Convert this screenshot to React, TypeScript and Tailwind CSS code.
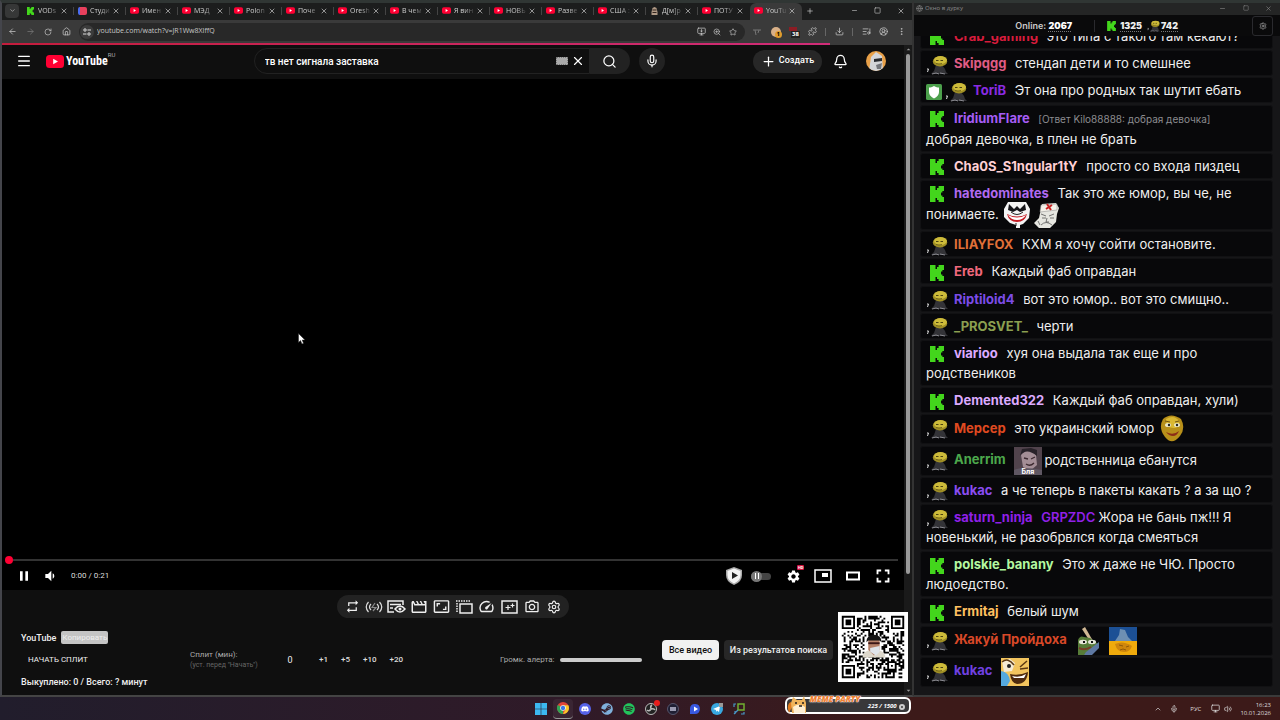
import { ReactNode, useState } from 'react';
import { X, Plus, Minus, Square, ArrowLeft, ArrowRight, RotateCw, House, Search, ZoomIn, Star, Puzzle, Download, ListMusic, CircleUserRound, EllipsisVertical, Menu, Mic, Bell, ChevronDown, ChevronUp, MonitorDown, Globe, Settings, Volume2, Monitor } from 'lucide-react';
import { MdRepeat, MdOutlineMovie, MdAspectRatio, MdOutlineSpeed, MdOutlinePhotoCamera, MdFullscreen, MdPause, MdVolumeDown, MdSettings, MdArrowDropDown, MdArrowDropUp } from 'react-icons/md';
import { FaDiscord, FaSpotify, FaSteam } from 'react-icons/fa';

type Badge = 'kick' | 'twitch' | 'mod';
type EmoteName = 'troll' | 'nurse' | 'smile' | 'photo' | 'frog' | 'flag' | 'laugh';

interface Message {
    badges: Badge[];
    name: string;
    color: string;
    tag?: string;
    reply?: string;
    body: (string | { emote: EmoteName })[];
}

const tabs = [
    { icon: 'kick', title: 'VODs' },
    { icon: 'studio', title: 'Студи' },
    { icon: 'yt', title: 'Имен' },
    { icon: 'yt', title: 'МЭД' },
    { icon: 'yt', title: 'Polon' },
    { icon: 'yt', title: 'Поче' },
    { icon: 'yt', title: 'Oresh' },
    { icon: 'yt', title: 'В чем' },
    { icon: 'yt', title: 'Я вин' },
    { icon: 'yt', title: 'НОВЬ' },
    { icon: 'yt', title: 'Разве' },
    { icon: 'yt', title: 'США :' },
    { icon: 'face', title: 'Д[м]р' },
    { icon: 'yt', title: 'ПОТУ' },
    { icon: 'yt', title: 'YouTu' },
];

const messages: Message[] = [
    { badges: ['kick'], name: 'Crab_gaming', color: 'text-[#d81c3c]', body: ['это типа с такого там кекают?'] },
    { badges: ['twitch'], name: 'Skipqgg', color: 'text-[#e05c85]', body: ['стендап дети и то смешнее'] },
    { badges: ['mod', 'twitch'], name: 'ToriB', color: 'text-[#8a2be2]', body: ['Эт она про родных так шутит ебать'] },
    { badges: ['kick'], name: 'IridiumFlare', color: 'text-[#a55cf5]', reply: '[Ответ Kilo88888: добрая девочка]', body: ['добрая девочка, в плен не брать'] },
    { badges: ['kick'], name: 'Cha0S_S1ngular1tY', color: 'text-[#ffd0d4]', body: ['просто со входа пиздец'] },
    { badges: ['kick'], name: 'hatedominates', color: 'text-[#b06af0]', body: ['Так это же юмор, вы че, не понимаете. ', { emote: 'troll' }, { emote: 'nurse' }] },
    { badges: ['twitch'], name: 'ILIAYFOX', color: 'text-[#e07038]', body: ['КХМ я хочу сойти остановите.'] },
    { badges: ['kick'], name: 'Ereb', color: 'text-[#f0687c]', body: ['Каждый фаб оправдан'] },
    { badges: ['twitch'], name: 'Riptiloid4', color: 'text-[#7c4ce8]', body: ['вот это юмор.. вот это смищно..'] },
    { badges: ['twitch'], name: '_PROSVET_', color: 'text-[#8ca050]', body: ['черти'] },
    { badges: ['kick'], name: 'viarioo', color: 'text-[#dcaaff]', body: ['хуя она выдала так еще и про родствеников'] },
    { badges: ['kick'], name: 'Demented322', color: 'text-[#dcaaff]', body: ['Каждый фаб оправдан, хули)'] },
    { badges: ['twitch'], name: 'Мерсер', color: 'text-[#e04a20]', body: ['это украинский юмор ', { emote: 'smile' }] },
    { badges: ['twitch'], name: 'Anerrim', color: 'text-[#4ca84c]', body: [{ emote: 'photo' }, 'родственница ебанутся'] },
    { badges: ['twitch'], name: 'kukac', color: 'text-[#8a4cf0]', body: ['а че теперь в пакеты какать ? а за що ?'] },
    { badges: ['twitch'], name: 'saturn_ninja', color: 'text-[#9020e8]', tag: 'GRPZDC', body: ['Жора не бань пж!!! Я новенький, не разобрвлся когда смеяться'] },
    { badges: ['kick'], name: 'polskie_banany', color: 'text-[#b4f8a0]', body: ['Это ж даже не ЧЮ. Просто людоедство.'] },
    { badges: ['kick'], name: 'Ermitaj', color: 'text-[#ffc060]', body: ['белый шум'] },
    { badges: ['twitch'], name: 'Жакуй Пройдоха', color: 'text-[#d84828]', body: [{ emote: 'frog' }, ' ', { emote: 'flag' }] },
    { badges: ['twitch'], name: 'kukac', color: 'text-[#7040e0]', body: [{ emote: 'laugh' }] },
];

function KickLogo({ className }: { className: string }) {
    return (
        <svg viewBox="0 0 14 16" className={className} fill="#43d61c">
            <path d="M0 0h5.500v4H7V2h1.600V0H14v5h-1.600v1.600H11v2.800h1.400V11H14v5H8.600v-2H7v-2H5.500v4H0z" />
        </svg>
    );
}

function TwitchGuy({ className }: { className: string }) {
    return (
        <svg viewBox="0 0 22 20" className={className}>
            <path d="M5 19 8 16l2-6h6l3 4 1 3 2 2z" fill="#333337" />
            <path d="m6 19 4-1 3 1m1-1 5 1" stroke="#8a8a90" strokeWidth="1" fill="none" />
            <ellipse cx="14" cy="6.500" rx="7.200" ry="5" fill="#a08f24" />
            <ellipse cx="14.500" cy="5" rx="6.500" ry="4" fill="#cdbb3a" />
            <path d="M10 5.500h2.500m2 0H17" stroke="#4b4312" strokeWidth="1.200" />
            <path d="M10 8.500q3 1 6 0" stroke="#665a18" strokeWidth=".8" fill="none" />
            <path d="m1 14 1.500 0-1 3" stroke="#ddd" strokeWidth="1" fill="none" />
        </svg>
    );
}

function YouTubeIcon({ className }: { className: string }) {
    return (
        <svg viewBox="0 0 18 13" className={className}>
            <rect width="18" height="13" rx="3.500" fill="#ff0033" />
            <path d="M7.200 3.700v5.600l4.800-2.800z" fill="#fff" />
        </svg>
    );
}

function ChatBadge({ badge }: { badge: Badge }) {
    if (badge === 'mod') {
        return (
            <svg viewBox="0 0 16 16" className="-my-1 mr-[3px] inline-block size-4 align-middle">
                <rect width="16" height="16" rx="1.500" fill="#4ca04c" />
                <path d="M8 2c2 1.200 3.500 1.500 5 1.500V8c0 3-2 5-5 6.500C5 13 3 11 3 8V3.500C4.500 3.500 6 3.200 8 2z" fill="#fff" />
            </svg>
        );
    }
    return (
        <span className="-my-1 mr-1.5 inline-flex h-5 w-[22px] items-center justify-center align-middle">
            {badge === 'kick' ? <KickLogo className="h-4 w-3.5" /> : <TwitchGuy className="h-5 w-[22px]" />}
        </span>
    );
}

function Emote({ name }: { name: EmoteName }) {
    const art: Record<EmoteName, ReactNode> = {
        troll: (
            <>
                <path d="M5 1h18l4 7-1 9-6 6-3 1v3h-4v-3l-6-2-6-6V8z" fill="#f4f4f4" />
                <path d="m6 3 5 5 3-3 3 3 5-5 1 6-6 2-3-2-4 2-5-2z" fill="#16161a" />
                <path d="M4 13q10 5 20 0-2 8-10 8T4 13z" fill="#c41c24" />
                <path d="M5 14q9 5 18 0-3 5-9 5t-9-5z" fill="#fff" />
                <path d="M8 11q6 5 12 0M13 22v3" stroke="#222" fill="none" />
            </>
        ),
        nurse: (
            <>
                <path d="m9 3 14-1 3 5-2 6-1 8-6 6H6l-5-5 5-5z" fill="#e6e6e0" />
                <path d="m8 4 16-1v6L7 11z" fill="#f4f1e9" stroke="#888" strokeWidth=".5" />
                <path d="m14 3 4 6m-5-1 6-4" stroke="#c82323" strokeWidth="2" />
                <path d="m8 13 5 2m3 0 5-2M9 17h4m4 0h4m-7 0-1 4h3m-8 3q5-5 11 0m-14-4 2 4" stroke="#555" strokeWidth=".8" fill="none" />
            </>
        ),
        smile: (
            <>
                <path d="M5 4q8-7 18 0 5 9-1 17-8 10-15 1Q0 13 5 4z" fill="#b8901a" />
                <path d="M8 4q8-5 13 2 1 6-4 7-9 1-9-9z" fill="#dab832" />
                <ellipse cx="10" cy="10" rx="3" ry="2" fill="#ece7c2" />
                <ellipse cx="19" cy="10" rx="3" ry="2" fill="#ece7c2" />
                <circle cx="11" cy="10" r="1.200" fill="#222" />
                <circle cx="19" cy="10" r="1.200" fill="#222" />
                <path d="M8 17q7 4 13-1-2 5-6 5t-7-4z" fill="#8c2d18" />
                <path d="m7 6 5 1m5 0 4-1" stroke="#735410" />
            </>
        ),
        photo: (
            <>
                <rect width="28" height="28" fill="#51434c" />
                <path d="M7 8q7-9 15 0l1 10-7 6-7-4z" fill="#a48e96" />
                <path d="M6 9q6-9 17 0V3L17 1 8 2z" fill="#292229" />
                <path d="m10 11 4 1m3 0 4-2m-9 7q4 3 8-1" stroke="#3c2930" strokeWidth="1.300" fill="none" />
                <path d="M0 23q8-4 28 0v5H0z" fill="#5f5763" />
                <text x="14" y="27" textAnchor="middle" fontSize="7" fontWeight="700" fill="#fff">Бля</text>
            </>
        ),
        frog: (
            <>
                <path d="m7 2 3-2 8 14-2 2z" fill="#d0b894" />
                <path d="M3 13q2-5 6-3l6 1 8 6-5 9-9 2H3z" fill="#577c38" />
                <path d="m11 25 13-10v6l-7 7H9z" fill="#5e78a2" />
                <ellipse cx="8" cy="15" rx="4" ry="2.200" fill="#e6e6d8" />
                <ellipse cx="17" cy="15" rx="4" ry="2.200" fill="#e6e6d8" />
                <path d="M9 14v2m8-2v2" stroke="#111" strokeWidth="2" />
                <path d="M4 21q6 3 12-1" stroke="#793d28" strokeWidth="2" fill="none" />
            </>
        ),
        flag: (
            <>
                <rect width="28" height="15" fill="#1c5095" />
                <rect y="14" width="28" height="14" fill="#efaa0c" />
                <path d="m11 2 5 1 3 7 4 4H6l4-6z" fill="#6d8fb3" />
                <path d="M6 17q8-4 17 2-2 6-8 6-7 0-9-8z" fill="#cf860c" />
                <path d="m10 18 4 1m3 1 3-1M11 23q3-2 6 0" stroke="#8f5a09" fill="none" />
            </>
        ),
        laugh: (
            <>
                <rect width="28" height="28" fill="#f2c45e" />
                <path d="m1 3 8-2 5 4-3 8-8 1z" fill="#f5ead3" />
                <circle cx="8" cy="8" r="2" fill="#222" />
                <path d="M1 4q6-5 12 3M19 9l7-6m-7 8 8-1" stroke="#5b3711" strokeWidth="1.500" fill="none" />
                <path d="M9 16q9 2 18-2-1 12-11 12-6-1-7-10z" fill="#4d2a0e" />
                <path d="M11 18q8 2 14-2l-2 4H13z" fill="#fff" />
                <path d="M0 13q8 1 9 10l-3 5H0z" fill="#55a9df" />
            </>
        ),
    };
    return (
        <svg viewBox="0 0 28 28" className="-my-[2px] mr-0.5 inline-block size-7 align-middle">
            {art[name]}
        </svg>
    );
}

function IconButton({ label, children, className = '' }: { label: string; children: ReactNode; className?: string }) {
    return (
        <button type="button" aria-label={label} className={`flex shrink-0 items-center justify-center ${className}`}>
            {children}
        </button>
    );
}

function TabIcon({ icon }: { icon: string }) {
    if (icon === 'kick') return <KickLogo className="h-2 w-[9px] shrink-0" />;
    if (icon === 'studio') return <span className="h-2 w-[9px] shrink-0 rounded-[2px] border-l-2 border-[#4a6cf0] bg-[#e8405c]" />;
    if (icon === 'face') {
        return (
            <svg viewBox="0 0 8 8" className="h-2 w-[9px] shrink-0">
                <path d="M1 8V5l1-4 2-1 2 1 1 4v3z" fill="#b09a86" />
                <path d="M2 3h4M2 5.500h4" stroke="#33251f" />
            </svg>
        );
    }
    return <YouTubeIcon className="h-[7px] w-[9px] shrink-0" />;
}

function TabStrip() {
    const [active, setActive] = useState(tabs.length - 1);

    return (
        <div className="flex h-[17px] bg-[#1c1d1d] text-[#cfcfcf]">
            <div className="flex w-5 shrink-0 items-center pb-[2px] pl-[3px]">
                <IconButton label="Поиск вкладок" className="size-3.5 rounded bg-[#363737]">
                    <ChevronDown size={7} />
                </IconButton>
            </div>
            <div className="flex min-w-0 flex-1">
                {tabs.map((tab, i) => (
                    <div
                        key={i}
                        className={`flex min-w-0 flex-1 items-center rounded-t-md pb-[2px] pl-1 text-[7px] leading-[10px] ${i === active ? 'bg-[#3a3a3a]' : ''}`}
                    >
                        <TabIcon icon={tab.icon} />
                        <button
                            type="button"
                            onClick={() => setActive(i)}
                            className="ml-[3px] min-w-0 flex-1 overflow-hidden text-left whitespace-nowrap [mask-image:linear-gradient(to_right,black_45%,transparent)]"
                        >
                            {tab.title}
                        </button>
                        <IconButton label="Закрыть вкладку" className="mr-[5px] w-2">
                            <X size={8} />
                        </IconButton>
                        <span className={`h-2 w-px shrink-0 ${i >= active - 1 ? '' : 'bg-[#444]'}`} />
                    </div>
                ))}
            </div>
            <div className="flex w-[110px] shrink-0 items-center pb-[2px]">
                <IconButton label="Новая вкладка" className="w-4"><Plus size={8} /></IconButton>
                <IconButton label="Свернуть" className="ml-auto w-[23px]"><Minus size={7} /></IconButton>
                <IconButton label="Развернуть" className="w-[23px]"><Square size={7} /></IconButton>
                <IconButton label="Закрыть" className="w-[23px]"><X size={8} /></IconButton>
            </div>
        </div>
    );
}

function AddressBar() {
    return (
        <div className="flex h-[23px] items-center bg-[#3a3a3a] text-[#c7c7c7]">
            <IconButton label="Назад" className="ml-px w-[18px]"><ArrowLeft size={9} /></IconButton>
            <IconButton label="Вперёд" className="w-[18px] text-[#777]"><ArrowRight size={9} /></IconButton>
            <IconButton label="Обновить" className="w-[18px]"><RotateCw size={8} /></IconButton>
            <IconButton label="Домой" className="w-[18px]"><House size={9} /></IconButton>
            <div className="ml-1 flex h-[18px] min-w-0 flex-1 items-center rounded-full bg-[#282828] pl-px">
                <IconButton label="Сведения о сайте" className="size-3.5 rounded-full bg-[#3c3c3c]">
                    <svg viewBox="0 0 8 8" className="size-2" fill="none" stroke="#ddd">
                        <path d="M4.500 2H8M0 6h3.500" />
                        <circle cx="2" cy="2" r="1.200" />
                        <circle cx="6" cy="6" r="1.200" />
                    </svg>
                </IconButton>
                <input
                    aria-label="Адрес"
                    defaultValue="youtube.com/watch?v=JR1Ww8XIffQ"
                    className="ml-[3px] min-w-0 flex-1 bg-transparent text-[7px] outline-none"
                />
                <IconButton label="Установить" className="w-4"><MonitorDown size={9} /></IconButton>
                <IconButton label="Масштаб" className="w-4"><ZoomIn size={8} /></IconButton>
                <IconButton label="В закладки" className="mr-1 w-4"><Star size={8} /></IconButton>
            </div>
            <div className="flex w-[167px] shrink-0 items-center justify-between pr-[6px] pl-[7px]">
                <svg viewBox="0 0 10 8" className="h-2 w-2.5"><path d="M1 2h8M3 2l1 5M7 2 6 5" stroke="#777" fill="none" /></svg>
                <span className="relative size-2.5 rounded-full bg-[#d8b088]">
                    <span className="absolute top-1 left-1 rounded-sm bg-[#e09c2c] px-0.5 text-[6px] leading-[7px] font-bold text-black">1</span>
                </span>
                <span className="relative size-2.5">
                    <span className="absolute top-0 left-0 h-1 w-2 bg-[#8c1c24]" />
                    <span className="absolute top-1 left-0.5 bg-[#222] px-px text-[6px] leading-[7px] font-bold text-white">38</span>
                </span>
                <Puzzle size={9} />
                <span className="h-2 w-px bg-[#666]" />
                <Download size={9} />
                <span className="h-2 w-px bg-[#666]" />
                <ListMusic size={9} />
                <CircleUserRound size={9} />
                <EllipsisVertical size={9} />
            </div>
        </div>
    );
}

function SiteHeader() {
    const [query, setQuery] = useState('тв нет сигнала заставка');

    return (
        <header className="flex h-[34px] shrink-0 items-center bg-[#0f0f0f] pb-[2px] font-[Roboto,sans-serif] text-white">
            <IconButton label="Меню" className="ml-[14px] w-4"><Menu size={16} strokeWidth={2} /></IconButton>
            <a href="#" className="ml-[14px] flex items-center">
                <YouTubeIcon className="h-[13px] w-[18px]" />
                <span className="ml-0.5 font-['Roboto_Condensed','Liberation_Sans_Narrow',Roboto,sans-serif] text-[12px] leading-4 font-bold">YouTube</span>
                <span className="mb-3 text-[6px] leading-[8px] text-[#aaa]">RU</span>
            </a>
            <div className="flex min-w-0 flex-1 items-center justify-center pl-[50px]">
                <div className="flex h-[26px] w-[336px] items-center rounded-l-full border border-[#222] bg-[#0f0f0f] pl-2.5">
                    <input
                        aria-label="Поиск"
                        value={query}
                        onChange={(event) => setQuery(event.target.value)}
                        className="min-w-0 flex-1 bg-transparent text-[10px] font-medium outline-none"
                    />
                    <span className="h-2 w-3 border border-dotted border-[#777] bg-[#aaa]" />
                    <IconButton label="Очистить" className="w-[21px]"><X size={14} strokeWidth={2} /></IconButton>
                </div>
                <IconButton label="Найти" className="h-[26px] w-10 rounded-r-full bg-[#222]"><Search size={15} strokeWidth={2} /></IconButton>
                <IconButton label="Голосовой поиск" className="ml-[9px] size-[26px] rounded-full bg-[#222]"><Mic size={14} strokeWidth={2} /></IconButton>
            </div>
            <button type="button" className="flex h-[23px] w-[69px] items-center justify-center gap-[3px] rounded-full bg-[#272727] text-[9px] font-medium">
                <Plus size={15} strokeWidth={2} />
                Создать
            </button>
            <IconButton label="Уведомления" className="ml-2.5 w-4"><Bell size={15} strokeWidth={2} /></IconButton>
            <IconButton label="Аккаунт" className="mr-[18px] ml-[18px]">
                <svg viewBox="0 0 20 20" className="size-5 rounded-full">
                    <rect width="20" height="20" fill="#e8a048" />
                    <path d="M3 20 5 6l5-5 6 4 1 15z" fill="#d3d5d8" />
                    <path d="m8 8 8-1v3l-8 1z" fill="#272a2f" />
                    <path d="m10 14 6-2-1 6h-4z" fill="#73767b" />
                </svg>
            </IconButton>
        </header>
    );
}

function PlayerControls() {
    return (
        <div className="shrink-0 bg-black font-[Roboto,sans-serif] text-white">
            <div className="flex items-center pr-[6px] pl-[3px]">
                <span className="size-2 shrink-0 rounded-full bg-[#ff0033]" />
                <span className="h-0.5 flex-1 bg-[#333]" />
            </div>
            <div className="flex h-[26px] items-center pr-[10px] pb-[2px] pl-3.5">
                <IconButton label="Пауза" className="w-4">
                    <MdPause size={20} />
                </IconButton>
                <IconButton label="Звук" className="ml-2.5 w-4"><MdVolumeDown size={16} /></IconButton>
                <span className="ml-[13px] text-[8px] text-[#ddd]">0:00 / 0:21</span>
                <div className="ml-auto flex items-center">
                    <svg viewBox="0 0 18 18" className="size-[18px]">
                        <path d="m9 0 8 3v5q0 7-8 10Q1 15 1 8V3z" fill="#aaa" />
                        <path d="m9 1.500 6.500 2.500v4q0 5.500-6.500 8.500Q2.500 13.500 2.500 8V4z" fill="#f4f4f4" />
                        <path d="m7 5 6 3.500L7 12z" fill="#222" />
                    </svg>
                    <span className="ml-2 flex h-[7px] w-5 items-center rounded-full bg-[#444]">
                        <span className="flex size-[11px] shrink-0 items-center justify-center gap-0.5 rounded-full bg-[#777]">
                            <span className="h-1.5 w-px bg-white" /><span className="h-1.5 w-px bg-white" />
                        </span>
                    </span>
                    <IconButton label="Настройки" className="relative ml-[14px] w-4">
                        <MdSettings size={15} />
                        <span className="absolute -top-1 left-3 rounded-[1px] bg-[#d0103c] px-px text-[4px] leading-[5px] font-bold">HD</span>
                    </IconButton>
                    <IconButton label="Мини-проигрыватель" className="ml-[13px]">
                        <svg viewBox="0 0 18 14" className="h-3.5 w-[18px]"><path d="M1 1h16v12H1z" fill="none" stroke="#fff" strokeWidth="1.500" /><path d="M8 4h6v4H8z" fill="#fff" /></svg>
                    </IconButton>
                    <IconButton label="Широкий экран" className="ml-[14px]">
                        <svg viewBox="0 0 14 10" className="h-2.5 w-3.5"><path d="M1 1.500h12v7H1z" fill="none" stroke="#fff" strokeWidth="2" /></svg>
                    </IconButton>
                    <IconButton label="Во весь экран" className="ml-3"><MdFullscreen size={22} /></IconButton>
                </div>
            </div>
        </div>
    );
}

function ToolPill() {
    return (
        <div className="mx-auto flex h-[23px] w-[232px] items-center justify-between rounded-full bg-[#222] px-1 text-[#eee]">
            <IconButton label="Повтор" className="w-[22px]"><MdRepeat size={15} /></IconButton>
            <IconButton label="Усиление звука" className="w-[22px]">
                <svg viewBox="0 0 18 14" className="h-3.5 w-[18px]" fill="none" stroke="#ddd" strokeWidth="1.200">
                    <path d="M3.500 2Q-1 7 3.500 12M6 4Q3 7 6 10M14.500 2q4.500 5 0 10M12 4q3 3 0 6" />
                    <path d="m10 3-3 4.500h4L8 11" stroke="#888" />
                </svg>
            </IconButton>
            <IconButton label="Режим просмотра" className="w-[22px]">
                <svg viewBox="0 0 19 14" className="h-3.5 w-[19px]" fill="none" stroke="#eee" strokeWidth="1.500">
                    <path d="M7 12H1V1h15v4M3 4.500h11M3 8h3" />
                    <path d="M8 9q5-6 10 0-5 6-10 0z" fill="#222" />
                    <circle cx="13" cy="9" r="1.500" fill="#eee" stroke="none" />
                </svg>
            </IconButton>
            <IconButton label="Кинорежим" className="w-[22px]"><MdOutlineMovie size={18} /></IconButton>
            <IconButton label="Соотношение сторон" className="w-[22px]"><MdAspectRatio size={17} /></IconButton>
            <IconButton label="Всплывающий плеер" className="w-[22px]">
                <svg viewBox="0 0 17 14" className="h-3.5 w-[17px]" fill="none" stroke="#eee" strokeWidth="1.500">
                    <path d="M4 4h12v9H4z" />
                    <path d="M0 1h14M1 3v9" strokeDasharray="1.500 1" />
                </svg>
            </IconButton>
            <IconButton label="Скорость" className="w-[22px]"><MdOutlineSpeed size={17} /></IconButton>
            <IconButton label="Фильтры" className="w-[22px]">
                <svg viewBox="0 0 17 14" className="h-3.5 w-[17px]" fill="none" stroke="#eee" strokeWidth="1.500">
                    <path d="M1 1h15v12H1z" />
                    <path d="M7 5v5M4.500 7.500h5M11.500 3.500v4m-2-2h4" strokeWidth="1.200" />
                </svg>
            </IconButton>
            <IconButton label="Снимок" className="w-[22px]"><MdOutlinePhotoCamera size={16} /></IconButton>
            <IconButton label="Настройки расширения" className="w-[22px]"><Settings size={14} /></IconButton>
        </div>
    );
}

const QR_SIZE = 33;

function isDark(x: number, y: number): boolean {
    const corners = [[0, 0], [QR_SIZE - 7, 0], [0, QR_SIZE - 7]];
    for (const [cx, cy] of corners) {
        const dx = x - cx;
        const dy = y - cy;
        if (dx >= -1 && dx <= 7 && dy >= -1 && dy <= 7) {
            const ring = Math.max(Math.abs(dx - 3), Math.abs(dy - 3));
            return ring === 3 || ring <= 1;
        }
    }
    const align = Math.max(Math.abs(x - 26), Math.abs(y - 26));
    if (align <= 2) return align !== 1;
    if (x > 11 && x < 21 && y > 10 && y < 21) return false;
    return ((x * 73 + y * 151 + x * y * 37 + ((x * x * 11) ^ (y * y * 7))) % 17) % 2 === 0;
}

function QrCode() {
    let path = '';
    for (let y = 0; y < QR_SIZE; y++) {
        for (let x = 0; x < QR_SIZE; x++) {
            if (isDark(x, y)) path += `M${x} ${y}h1v1h-1z`;
        }
    }
    return (
        <svg viewBox="-2 -2 37 37" className="size-[70px] bg-white" role="img" aria-label="QR-код">
            <path d={path} fill="#000" />
            <path d="M11 22q0-3 4-4h4q4 1 4 4z" fill="#ddd8cc" />
            <path d="M14 12h6v6l-3 3-3-3z" fill="#b58068" />
            <path d="M13 14q0-4 4-4t4 4l-1-1h-6z" fill="#151515" />
            <path d="M14 14.500h6" stroke="#3b1717" />
            <path d="m15 17 5-1v3l-2 2-3-2z" fill="#dfe4ea" />
        </svg>
    );
}

function SplitPanel() {
    return (
        <div className="flex items-end px-[19px] font-[Roboto,sans-serif] text-[8px] leading-3 text-[#eee]">
            <div className="w-[169px]">
                <div className="flex items-center gap-[5px]">
                    <span className="text-[9px] font-medium">YouTube</span>
                    <button type="button" className="h-[13px] w-[47px] rounded-[2px] bg-[#c4c4c4] text-[#eee]">Копировать</button>
                </div>
                <button type="button" className="mt-2 ml-[7px] block h-4">НАЧАТЬ СПЛИТ</button>
                <p className="mt-2 text-[9px] font-medium whitespace-nowrap">Выкуплено: 0 / Всего: ? минут</p>
            </div>
            <div className="mb-[18px] flex min-w-0 flex-1 items-center">
                <label htmlFor="split" className="w-[86px] shrink-0 text-[#aaa]">
                    Сплит (мин):
                    <small className="block text-[7px] leading-[9px] text-[#666]">(уст. перед "Начать")</small>
                </label>
                <input id="split" defaultValue="0" className="w-7 bg-transparent text-center text-[9px] outline-none" />
                <div className="ml-[15px] flex gap-[13px] font-medium text-[#ddd]">
                    <button type="button">+1</button>
                    <button type="button">+5</button>
                    <button type="button">+10</button>
                    <button type="button">+20</button>
                </div>
            </div>
            <div className="mb-[22px] flex w-[162px] items-center">
                <label htmlFor="volume" className="w-[60px] shrink-0 whitespace-nowrap text-[#aaa]">Громк. алерта:</label>
                <input id="volume" type="range" className="mr-5 h-1 min-w-0 flex-1 appearance-none rounded-full bg-[#ccc] [&::-webkit-slider-thumb]:appearance-none" />
            </div>
            <div className="mb-[28px] flex w-[223px] gap-[5px] text-[9px] font-medium">
                <button type="button" className="h-5 w-[57px] rounded bg-[#f1f1f1] text-[#0f0f0f]">Все видео</button>
                <button type="button" className="h-5 w-[109px] rounded bg-[#272727]">Из результатов поиска</button>
            </div>
        </div>
    );
}

function BrowserWindow() {
    return (
        <section className="relative flex min-w-0 flex-1 flex-col border-t-[3px] border-r-2 border-b-2 border-l-2 border-t-[#303634] border-r-[#333] border-b-[#444] border-l-[#44454b] bg-[#0f0f0f]">
            <TabStrip />
            <AddressBar />
            <div className="h-0.5 bg-[#3a3a3a]">
                <div className="h-full w-[91%] bg-linear-to-r from-[#c41c3c] to-[#d02c78]" />
            </div>
            <div className="flex min-h-0 flex-1">
                <div className="flex min-w-0 flex-1 flex-col">
                    <SiteHeader />
                    <div className="min-h-0 flex-1 bg-black" />
                    <PlayerControls />
                    <div className="shrink-0 pt-[5px] pb-[7px]">
                        <ToolPill />
                        <div className="mt-[13px]">
                            <SplitPanel />
                        </div>
                    </div>
                </div>
                {/* Scrollbar */}
                <div className="flex w-2 shrink-0 flex-col items-center bg-[#1a1a1a] text-[#999]">
                    <MdArrowDropUp size={9} />
                    <span className="h-[520px] max-h-[81%] w-1 rounded-full bg-[#9a9a9a]" />
                    <MdArrowDropDown size={9} className="mt-auto" />
                </div>
            </div>
            {/* Stream overlay */}
            <div className="absolute right-1 bottom-[13px]">
                <QrCode />
            </div>
            {/* Mouse cursor */}
            <svg viewBox="0 0 8 12" className="absolute top-[330px] left-[296px] h-3 w-2">
                <path d="M.5.500v9l2-2 1.500 3.500 1.500-.7L4.200 7H7z" fill="#fff" stroke="#222" strokeWidth=".5" />
            </svg>
        </section>
    );
}

function ChatMessage({ message }: { message: Message }) {
    return (
        <li className="rounded-[3px] border border-[#111113] bg-[#08080a] px-[5px] py-[2px]">
            {message.badges.map((badge) => <ChatBadge key={badge} badge={badge} />)}
            <span className={`mr-[5px] font-bold ${message.color}`}>{message.name}</span>{' '}
            {message.tag && <span className={`font-semibold ${message.color}`}>{message.tag} </span>}
            {message.reply && <span className="text-[10px] text-[#8c8c90]">{message.reply}<br /></span>}
            {message.body.map((part, i) => (
                typeof part === 'string' ? <span key={i}>{part}</span> : <Emote key={i} name={part.emote} />
            ))}
        </li>
    );
}

function ChatWindow() {
    return (
        <aside className="flex w-[366px] shrink-0 flex-col border-t-[3px] border-b-2 border-t-[#303634] border-b-[#3a3a3a] bg-[#161618] font-[Inter,sans-serif] text-[#eee]">
            <div className="flex h-3 shrink-0 items-center bg-[#242525] pb-[2px] pl-[2px] font-['Open_Sans',sans-serif] text-[6px] leading-[10px] text-[#8c8c8c]">
                <Globe size={7} />
                <span className="ml-[2px]">Окно в дурку</span>
                <IconButton label="Свернуть" className="ml-auto w-[23px]"><Minus size={7} /></IconButton>
                <IconButton label="Развернуть" className="w-[23px]"><Square size={6} /></IconButton>
                <IconButton label="Закрыть" className="w-[23px]"><X size={7} /></IconButton>
            </div>
            <div className="flex h-[21px] shrink-0 items-center justify-end bg-[#0a0a0b] text-[9px] font-semibold">
                <span className="text-[#c8c8c8]">Online: <b className="text-white underline decoration-[#777] decoration-dotted underline-offset-2">2067</b></span>
                <span className="ml-[22px] h-3 w-px bg-[#2a2a2e]" />
                <KickLogo className="ml-[12px] h-2.5 w-[9px]" />
                <b className="ml-1 underline decoration-[#777] decoration-dotted underline-offset-2">1325</b>
                <TwitchGuy className="ml-[5px] h-3 w-[13px]" />
                <b className="mr-[74px] ml-px underline decoration-[#777] decoration-dotted underline-offset-2">742</b>
                <IconButton label="Настройки чата" className="mr-[7px] h-5 w-[21px] rounded-[3px] border border-[#2a2a2e] text-[#aaa]"><Settings size={8} /></IconButton>
            </div>
            <div className="flex min-h-0 flex-1 flex-col overflow-hidden">
                {/* Scrolled to the newest message, the oldest one is cut by the header */}
                <ul className="-mt-[13px] mr-[7px] mb-2 ml-[6px] flex flex-1 flex-col justify-between text-[13px] leading-5">
                    {messages.map((message, i) => <ChatMessage key={i} message={message} />)}
                </ul>
            </div>
        </aside>
    );
}

function Taskbar() {
    return (
        <footer className="relative flex h-[23px] shrink-0 items-center bg-linear-to-r from-[#211d2c] via-[#301a28] via-45% to-[#3c1a19] to-70% text-[#ddd]">
            <div className="flex flex-1 items-center justify-center gap-[10px]">
                <svg viewBox="0 0 12 12" className="size-3"><path d="M0 0h5.700v5.700H0zm6.300 0H12v5.700H6.300zM0 6.300h5.700V12H0zm6.300 0H12V12H6.300z" fill="#3cb8f0" /></svg>
                <span className="-mx-1 flex h-5 w-5 items-center justify-center rounded-sm border-b border-[#999] bg-white/5">
                    <svg viewBox="0 0 12 12" className="size-3">
                        <circle cx="6" cy="6" r="6" fill="#e04438" />
                        <path d="M.8 3 6 6v6A6 6 0 0 1 .8 3z" fill="#30a454" />
                        <path d="M6 12 8.600 7.500 6 3.200h5.300A6 6 0 0 1 6 12z" fill="#f8c828" />
                        <circle cx="6" cy="6" r="2.800" fill="#fff" />
                        <circle cx="6" cy="6" r="2.200" fill="#3c78e8" />
                    </svg>
                </span>
                <span className="flex size-3 items-center justify-center rounded-full bg-[#5562e8] text-white"><FaDiscord size={8} /></span>
                <FaSteam size={12} color="#7fb0dc" />
                <FaSpotify size={12} color="#22c45c" />
                <span className="relative flex size-3 items-center justify-center rounded-full border border-[#bbb] bg-[#222]">
                    <svg viewBox="0 0 10 10" className="size-2.5"><path d="M5 5q-1-3 1-4M5 5q3-1 4 1M5 5Q3 8 1 6" stroke="#bbb" strokeWidth="1.500" fill="none" /></svg>
                    <span className="absolute -top-1 -right-1 size-1.5 rounded-full bg-[#e81c1c]" />
                </span>
                <span className="flex size-3 items-center justify-center rounded-full border border-[#55556c] bg-[#1f1f33]"><span className="h-1 w-1.5 bg-[#9a9ab0]" /></span>
                <svg viewBox="0 0 12 12" className="size-3"><path d="M1 11V5a5 5 0 1 1 5 6z" fill="#3858e0" /><path d="m5 3.500 4 2.500-4 2.500z" fill="#fff" /></svg>
                <svg viewBox="0 0 12 12" className="size-3"><circle cx="6" cy="6" r="6" fill="#38a8e0" /><path d="m2 6 7-3-1 6-2-1.500L5 9V7z" fill="#fff" /><path d="M8 0h4v4H8z" fill="#999" /></svg>
                <svg viewBox="0 0 12 12" className="size-3" fill="none"><path d="M5 1h6v6H5z" stroke="#70b030" strokeWidth="1.500" /><path d="M1 4V1h2M1 11l4-4M2 8v3M8 11h3V9" stroke="#4898c8" strokeWidth="1.200" /></svg>
            </div>
            <div className="absolute right-0 flex items-center pr-[9px] font-['Open_Sans',sans-serif] text-[6px] leading-[8px]">
                <ChevronUp size={8} />
                <Mic size={8} className="ml-2" />
                <span className="ml-3">РУС</span>
                <Monitor size={9} className="ml-2.5" />
                <Volume2 size={8} className="ml-1" />
                <div className="ml-2 text-right"><div>16:23</div><div>10.01.2026</div></div>
            </div>
            {/* Donation goal overlay */}
            <div className="absolute top-0 left-[61.300%] flex h-[17px] w-[126px] items-center justify-end rounded-md border-2 border-white bg-[#38383a] pr-1">
                <svg viewBox="0 0 20 18" className="absolute -top-1 left-0 h-[18px] w-5">
                    <path d="M2 18Q-1 9 4 7l2 3z" fill="#e07c20" />
                    <path d="m4 8 2-6 4 3h5l2-4 2 7v10H5z" fill="#f0b45c" />
                    <path d="M6 12q6-5 12 0v6H7z" fill="#fff0d4" />
                    <path d="M8 8h2m5 0h2m-5 3h3" stroke="#221b18" strokeWidth="1.500" />
                </svg>
                <span className="absolute -top-1.5 left-[23px] text-[8px] leading-3 font-black whitespace-nowrap text-[#f08030] italic [text-shadow:0_0_1px_white,0_0_1px_white,0_0_2px_white]">MEME PARTY</span>
                <span className="mt-0.5 text-[6px] font-bold text-white italic">225 / 1500</span>
                <span className="mt-0.5 ml-0.5 size-1.5 rounded-full border-2 border-[#ccc]" />
            </div>
        </footer>
    );
}

export default function App() {
    return (
        <div className="flex h-screen flex-col overflow-hidden bg-black font-['Open_Sans',sans-serif]">
            <main className="flex min-h-0 flex-1">
                <BrowserWindow />
                <ChatWindow />
            </main>
            <Taskbar />
        </div>
    );
}
